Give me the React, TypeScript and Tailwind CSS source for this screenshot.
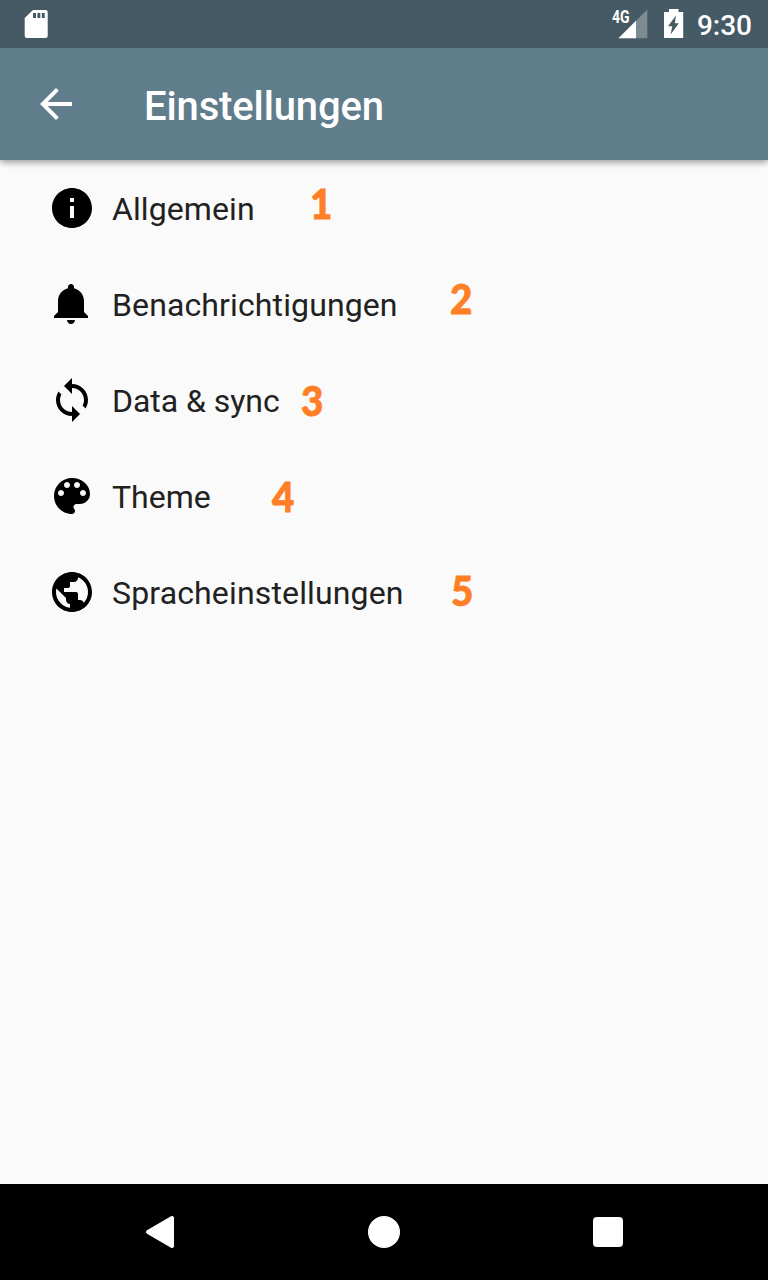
const ICONS = {
  info: "M12 2C6.48 2 2 6.48 2 12s4.48 10 10 10 10-4.48 10-10S17.52 2 12 2zm1 15h-2v-6h2v6zm0-8h-2V7h2v2z",
  bell: "M11.5 22c1.1 0 2-.9 2-2h-4c0 1.1.9 2 2 2zm6.5-6v-5.5c0-3.07-2.13-5.64-5-6.32V3.5c0-.83-.67-1.5-1.5-1.5S10 2.67 10 3.5v.68c-2.87.68-5 3.25-5 6.32V16l-2 2v1h17v-1l-2-2z",
  sync: "M12 4V1L8 5l4 4V6c3.31 0 6 2.69 6 6 0 1.01-.25 1.97-.7 2.8l1.46 1.46C19.54 15.03 20 13.57 20 12c0-4.42-3.58-8-8-8zm0 14c-3.31 0-6-2.69-6-6 0-1.01.25-1.97.7-2.8L5.24 7.74C4.46 8.97 4 10.43 4 12c0 4.42 3.58 8 8 8v3l4-4-4-4v3z",
  palette:
    "M12 3c-4.97 0-9 4.03-9 9s4.03 9 9 9c.83 0 1.5-.67 1.5-1.5 0-.39-.15-.74-.39-1.01-.23-.26-.38-.61-.38-.99 0-.83.67-1.5 1.5-1.5H16c2.76 0 5-2.24 5-5 0-4.42-4.03-8-9-8zm-5.5 9c-.83 0-1.5-.67-1.5-1.5S5.67 9 6.5 9 8 9.67 8 10.5 7.33 12 6.5 12zm3-4C8.67 8 8 7.33 8 6.5S8.67 5 9.5 5s1.5.67 1.5 1.5S10.33 8 9.5 8zm5 0c-.83 0-1.5-.67-1.5-1.5S13.67 5 14.5 5s1.5.67 1.5 1.5S15.33 8 14.5 8zm3 4c-.83 0-1.5-.67-1.5-1.5S16.67 9 17.5 9s1.5.67 1.5 1.5-.67 1.5-1.5 1.5z",
  globe:
    "M12 2C6.48 2 2 6.48 2 12s4.48 10 10 10 10-4.48 10-10S17.52 2 12 2zm-1 17.93c-3.95-.49-7-3.85-7-7.93 0-.62.08-1.21.21-1.79L9 15v1c0 1.1.9 2 2 2v1.93zm6.9-2.54c-.26-.81-1-1.39-1.9-1.39h-1v-3c0-.55-.45-1-1-1H8v-2h2c.55 0 1-.45 1-1V7h2c1.1 0 2-.9 2-2v-.41c2.93 1.19 5 4.06 5 7.41 0 2.08-.8 3.97-2.1 5.39z",
  back: "M20 11H7.83l5.59-5.59L12 4l-8 8 8 8 1.41-1.41L7.83 13H20v-2z",
};

type Row = { icon: keyof typeof ICONS; label: string; tracking: string; mark: string; place: string };

// The orange callout numbers float over the rows.
const ROWS: Row[] = [
  { icon: "info", label: "Allgemein", tracking: "tracking-[0.1px]", mark: "1", place: "left-[310px] top-[22px]" },
  { icon: "bell", label: "Benachrichtigungen", tracking: "tracking-[0.12px]", mark: "2", place: "left-[450px] top-[21px]" },
  { icon: "sync", label: "Data & sync", tracking: "tracking-[-0.05px]", mark: "3", place: "left-[300.5px] top-[27px]" },
  { icon: "palette", label: "Theme", tracking: "tracking-normal", mark: "4", place: "left-[272px] top-[27px]" },
  { icon: "globe", label: "Spracheinstellungen", tracking: "tracking-[0.15px]", mark: "5", place: "left-[451px] top-[25px]" },
];

function Icon({ name, className }: { name: keyof typeof ICONS; className?: string }) {
  return (
    <svg viewBox="0 0 24 24" fill="currentColor" className={`size-12 shrink-0 ${className ?? ""}`}>
      <path d={ICONS[name]} />
    </svg>
  );
}

function StatusBar() {
  return (
    <header className="relative z-20 flex h-12 shrink-0 items-center justify-between bg-[#455a64] pr-4 pl-6 text-white">
      <svg viewBox="0 0 24 30" className="h-[30px] w-6" fill="white">
        <path
          fillRule="evenodd"
          d="M9 1H21.5Q23.7 1 23.7 3V27Q23.7 29 21.5 29H2.7Q.7 29 .7 27V9ZM9 4V9H12V4ZM13.4 4V9H16.3V4ZM17.8 4V9H20.7V4Z"
        />
      </svg>
      <div className="flex h-full items-center">
        <div className="relative h-12 w-9">
          <svg viewBox="0 0 36 48" className="h-12 w-9">
            <path d="M35.3 9.5V38.3H6.5Z" fill="#7d8b92" />
            <path d="M24 20.8V38.3H6.5Z" fill="white" />
          </svg>
          <span className="absolute top-[8px] left-0 origin-left scale-x-[.8] text-[17.5px] leading-[19px] font-bold">4G</span>
        </div>
        <svg viewBox="0 0 20 30" className="mr-[13px] ml-4 h-[30px] w-5">
          <path fill="white" d="M5 0H14.5V3H19.2V29H0V3H5Z" />
          <path fill="#455a64" d="M12 6.5L4 17.3H8.3L6.6 25.5L14.8 14.2H10.8Z" />
        </svg>
        <span className="pt-[3px] text-[28px] leading-8 font-medium">9:30</span>
      </div>
    </header>
  );
}

export default function App() {
  return (
    <div className="flex h-[1280px] w-[768px] flex-col overflow-hidden bg-[#fafafa] font-['Roboto',sans-serif]">
      <StatusBar />
      <div className="z-10 flex h-28 shrink-0 items-center bg-[#607d8b] pl-8 text-white shadow-[0_2px_7px_rgba(0,0,0,0.42)]">
        <Icon name="back" />
        <h1 className="ml-16 pt-1.5 text-[40px] leading-[48px] font-medium tracking-[-0.13px]">Einstellungen</h1>
      </div>
      <ul className="flex-1">
        {ROWS.map((r) => (
          <li key={r.label} className="relative flex h-24 items-center pl-12">
            <Icon name={r.icon} className="text-black" />
            <span className={`ml-4 pt-0.5 text-[32px] leading-10 text-[#212121] ${r.tracking}`}>{r.label}</span>
            <span
              className={`absolute origin-left scale-x-[.94] font-['Lato',sans-serif] text-[41px] leading-[44px] font-black text-[#ff7f27] [-webkit-text-stroke:0.8px_#ff7f27] ${r.place}`}
            >
              {r.mark}
            </span>
          </li>
        ))}
      </ul>
      <nav className="flex h-24 shrink-0 items-center justify-center bg-black">
        <div className="grid w-[672px] grid-cols-3 place-items-center">
          <svg viewBox="0 0 48 48" className="size-12">
            <path d="M12 24L36 10V38Z" fill="white" stroke="white" strokeWidth="4" strokeLinejoin="round" />
          </svg>
          <div className="size-8 rounded-full bg-white" />
          <div className="size-[30px] rounded-sm bg-white" />
        </div>
      </nav>
    </div>
  );
}
